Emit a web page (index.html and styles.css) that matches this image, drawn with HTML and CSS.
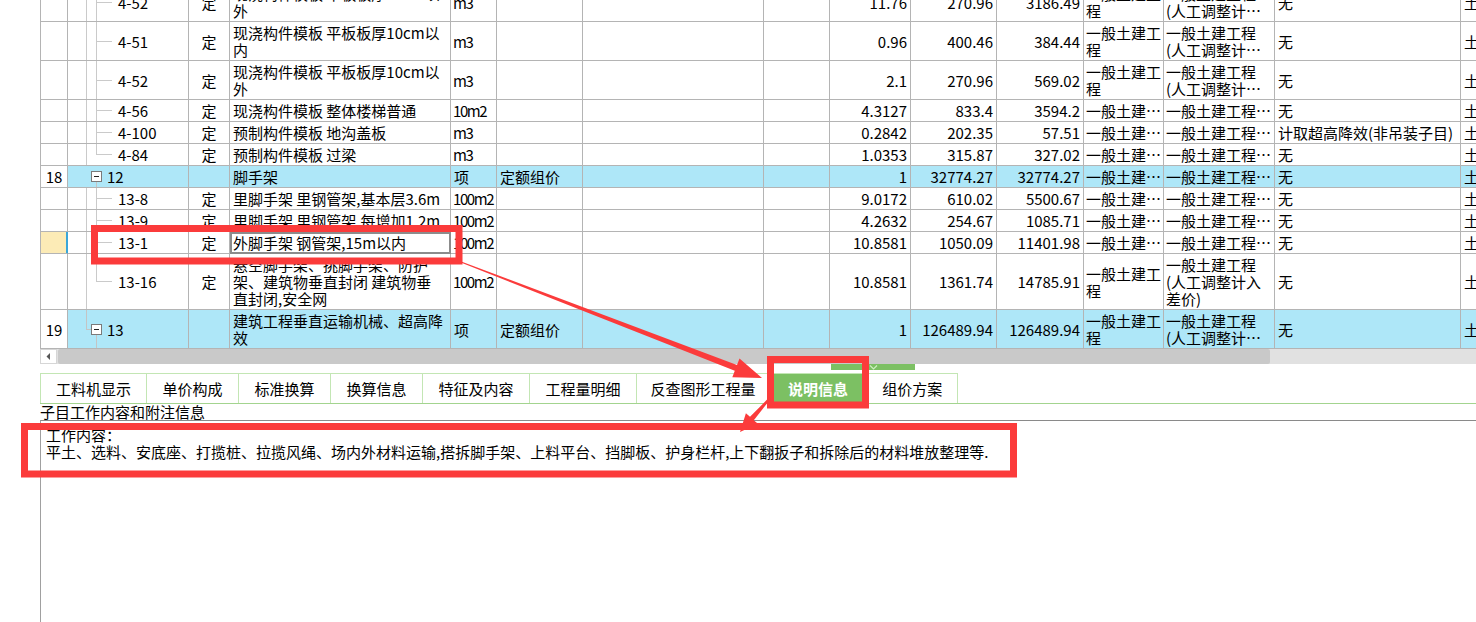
FILE: index.html
```html
<!DOCTYPE html>
<html lang="zh-CN">
<head>
<meta charset="utf-8">
<title>说明信息</title>
<link rel="stylesheet" href="styles.css">
</head>
<body>
<div class="page">
  <div class="pane">
    <div class="grid">
      <table class="sheet">
        <colgroup>
          <col class="k1"><col class="k2"><col class="k3"><col class="k4"><col class="k5">
          <col class="k6"><col class="k7"><col class="k8"><col class="k9"><col class="k10">
          <col class="k11"><col class="k12"><col class="k13"><col class="k14"><col class="k15">
        </colgroup>
        <tbody>
          <tr>
            <td class="no"></td>
            <td class="tree tc-mid">4-52</td>
            <td class="c">定</td>
            <td>现浇构件模板 平板板厚10cm以<br>外</td>
            <td class="u">m3</td><td></td><td></td><td></td>
            <td class="n">11.76</td><td class="n">270.96</td><td class="n">3186.49</td>
            <td class="s">一般土建工<br>程</td>
            <td class="s">一般土建工程<br>(人工调整计…</td>
            <td>无</td><td>土</td>
          </tr>
          <tr>
            <td class="no"></td>
            <td class="tree tc-mid">4-51</td>
            <td class="c">定</td>
            <td>现浇构件模板 平板板厚10cm以<br>内</td>
            <td class="u">m3</td><td></td><td></td><td></td>
            <td class="n">0.96</td><td class="n">400.46</td><td class="n">384.44</td>
            <td class="s">一般土建工<br>程</td>
            <td class="s">一般土建工程<br>(人工调整计…</td>
            <td>无</td><td>土</td>
          </tr>
          <tr>
            <td class="no"></td>
            <td class="tree tc-mid">4-52</td>
            <td class="c">定</td>
            <td>现浇构件模板 平板板厚10cm以<br>外</td>
            <td class="u">m3</td><td></td><td></td><td></td>
            <td class="n">2.1</td><td class="n">270.96</td><td class="n">569.02</td>
            <td class="s">一般土建工<br>程</td>
            <td class="s">一般土建工程<br>(人工调整计…</td>
            <td>无</td><td>土</td>
          </tr>
          <tr>
            <td class="no"></td>
            <td class="tree tc-mid">4-56</td>
            <td class="c">定</td>
            <td>现浇构件模板 整体楼梯普通</td>
            <td class="u">10m2</td><td></td><td></td><td></td>
            <td class="n">4.3127</td><td class="n">833.4</td><td class="n">3594.2</td>
            <td class="s">一般土建…</td><td class="s">一般土建工程…</td>
            <td>无</td><td>土</td>
          </tr>
          <tr>
            <td class="no"></td>
            <td class="tree tc-mid">4-100</td>
            <td class="c">定</td>
            <td>预制构件模板 地沟盖板</td>
            <td class="u">m3</td><td></td><td></td><td></td>
            <td class="n">0.2842</td><td class="n">202.35</td><td class="n">57.51</td>
            <td class="s">一般土建…</td><td class="s">一般土建工程…</td>
            <td>计取超高降效(非吊装子目)</td><td>土</td>
          </tr>
          <tr>
            <td class="no"></td>
            <td class="tree tc-last">4-84</td>
            <td class="c">定</td>
            <td>预制构件模板 过梁</td>
            <td class="u">m3</td><td></td><td></td><td></td>
            <td class="n">1.0353</td><td class="n">315.87</td><td class="n">327.02</td>
            <td class="s">一般土建…</td><td class="s">一般土建工程…</td>
            <td>无</td><td>土</td>
          </tr>
          <tr class="grp">
            <td class="no">18</td>
            <td class="tree tc-p1"><span class="node"><span class="fold"></span><span>12</span></span></td>
            <td class="c"></td>
            <td>脚手架</td>
            <td>项</td><td>定额组价</td><td></td><td></td>
            <td class="n">1</td><td class="n">32774.27</td><td class="n">32774.27</td>
            <td class="s">一般土建…</td><td class="s">一般土建工程…</td>
            <td>无</td><td>土</td>
          </tr>
          <tr>
            <td class="no"></td>
            <td class="tree tc-mid">13-8</td>
            <td class="c">定</td>
            <td>里脚手架 里钢管架,基本层3.6m</td>
            <td class="u">100m2</td><td></td><td></td><td></td>
            <td class="n">9.0172</td><td class="n">610.02</td><td class="n">5500.67</td>
            <td class="s">一般土建…</td><td class="s">一般土建工程…</td>
            <td>无</td><td>土</td>
          </tr>
          <tr>
            <td class="no"></td>
            <td class="tree tc-mid">13-9</td>
            <td class="c">定</td>
            <td>里脚手架 里钢管架,每增加1.2m</td>
            <td class="u">100m2</td><td></td><td></td><td></td>
            <td class="n">4.2632</td><td class="n">254.67</td><td class="n">1085.71</td>
            <td class="s">一般土建…</td><td class="s">一般土建工程…</td>
            <td>无</td><td>土</td>
          </tr>
          <tr class="cur">
            <td class="no mark"></td>
            <td class="tree tc-mid">13-1</td>
            <td class="c">定</td>
            <td class="edit">外脚手架 钢管架,15m以内</td>
            <td class="u">100m2</td><td></td><td></td><td></td>
            <td class="n">10.8581</td><td class="n">1050.09</td><td class="n">11401.98</td>
            <td class="s">一般土建…</td><td class="s">一般土建工程…</td>
            <td>无</td><td>土</td>
          </tr>
          <tr>
            <td class="no"></td>
            <td class="tree tc-last">13-16</td>
            <td class="c">定</td>
            <td>悬空脚手架、挑脚手架、防护<br>架、建筑物垂直封闭 建筑物垂<br>直封闭,安全网</td>
            <td class="u">100m2</td><td></td><td></td><td></td>
            <td class="n">10.8581</td><td class="n">1361.74</td><td class="n">14785.91</td>
            <td class="s">一般土建工<br>程</td>
            <td class="s">一般土建工程<br>(人工调整计入<br>差价)</td>
            <td>无</td><td>土</td>
          </tr>
          <tr class="grp">
            <td class="no">19</td>
            <td class="tree tc-p2"><span class="node"><span class="fold"></span><span>13</span></span></td>
            <td class="c"></td>
            <td>建筑工程垂直运输机械、超高降<br>效</td>
            <td>项</td><td>定额组价</td><td></td><td></td>
            <td class="n">1</td><td class="n">126489.94</td><td class="n">126489.94</td>
            <td class="s">一般土建工<br>程</td>
            <td class="s">一般土建工程<br>(人工调整计…</td>
            <td>无</td><td>土</td>
          </tr>
        </tbody>
      </table>
    </div>

    <div class="hscroll">
      <div class="sb-btn"><svg width="5" height="7" viewBox="0 0 5 7"><polygon points="4,0 4,7 0.5,3.5" fill="#555"/></svg></div>
      <div class="sb-thumb"></div>
    </div>

    <div class="gap">
      <div class="handle"><svg width="9" height="5" viewBox="0 0 9 5"><polyline points="1,0.5 4.5,4 8,0.5" fill="none" stroke="#cfeec2" stroke-width="1.2"/></svg></div>
    </div>

    <div class="tabbar">
      <div class="tabs">
        <div class="tab">工料机显示</div>
        <div class="tab">单价构成</div>
        <div class="tab">标准换算</div>
        <div class="tab">换算信息</div>
        <div class="tab">特征及内容</div>
        <div class="tab">工程量明细</div>
        <div class="tab">反查图形工程量</div>
        <div class="tab active">说明信息</div>
        <div class="tab">组价方案</div>
      </div>
    </div>

    <div class="desc-title">子目工作内容和附注信息</div>
    <div class="desc">
      <p>工作内容：</p>
      <p>平土、选料、安底座、打揽桩、拉揽风绳、场内外材料运输,搭拆脚手架、上料平台、挡脚板、护身栏杆,上下翻扳子和拆除后的材料堆放整理等.</p>
    </div>
  </div>

  <svg class="marks" width="1476" height="622" viewBox="0 0 1476 622">
    <g fill="none" stroke="#fb3b3b" stroke-width="7">
      <rect x="94.5" y="228.5" width="364.5" height="32.5"/>
      <rect x="770.5" y="359.5" width="95" height="45.5"/>
      <rect x="24.5" y="426.5" width="989" height="47.5"/>
    </g>
    <g fill="#fb3b3b">
      <polygon points="460.8,262.5 734.8,370.7 732.3,377.2 762,378 739.5,358.6 737,365.1 461.2,261.5"/>
      <polygon points="770.75,398.66 753.8,420.2 757.9,423.8 740,432 745.9,413.2 750,416.8 769.25,397.34"/>
    </g>
  </svg>
</div>
</body>
</html>
```

FILE: styles.css
```css
* { box-sizing: border-box; }

html, body {
  margin: 0;
  padding: 0;
  background: #fff;
}

body {
  font-family: "Noto Sans CJK SC", "Noto Sans", sans-serif;
  font-size: 15px;
  color: #000;
}

.page {
  position: relative;
  width: 1476px;
  height: 622px;
  overflow: hidden;
}

.pane {
  margin-left: 40px;
  height: 622px;
  display: flex;
  flex-direction: column;
}

/* ---------- grid ---------- */
.grid {
  height: 349px;
  overflow: hidden;
  border-left: 1px solid #b4b4b4;
  flex: none;
}

.sheet {
  margin-top: -17px;
  table-layout: fixed;
  border-collapse: separate;
  border-spacing: 0;
  width: 1490px;
}

.k1 { width: 27px; }
.k2 { width: 121px; }
.k3 { width: 41px; }
.k4 { width: 221px; }
.k5 { width: 46px; }
.k6 { width: 86px; }
.k7 { width: 181px; }
.k8 { width: 66px; }
.k9 { width: 81px; }
.k10 { width: 86px; }
.k11 { width: 87px; }
.k12 { width: 80px; }
.k13 { width: 111px; }
.k14 { width: 186px; }
.k15 { width: 70px; }

.sheet td {
  padding: 2px 3px;
  line-height: 17px;
  border-right: 1px solid #b4b4b4;
  border-bottom: 1px solid #b4b4b4;
  vertical-align: middle;
  white-space: nowrap;
  overflow: hidden;
  text-align: left;
  background-color: #fff;
}

.sheet td.c { text-align: center; padding: 2px 0; }
.sheet td.n { text-align: right; }
.sheet td.s { padding-left: 2px; padding-right: 0; }
.sheet td.u { padding-left: 2px; padding-right: 0; letter-spacing: -1.4px; }
.sheet td.no { text-align: center; padding: 2px 0; background-color: #fff; }

.sheet tr.grp td { background-color: #aee7f8; }
.sheet tr.grp td.no { background-color: #fff; }

.sheet td.mark {
  background-color: #fcebb6;
  border-right-color: #3aa6d8;
  box-shadow: inset -1px 0 0 #3aa6d8;
}

.sheet td.edit {
  outline: 2px solid #8c8c8c;
  outline-offset: -2px;
}

/* tree column: guide lines drawn with gradients */
.sheet td.tree { padding-left: 50px; }

.sheet td.tc-mid {
  background-image:
    linear-gradient(#cacaca, #cacaca),
    linear-gradient(#cacaca, #cacaca),
    linear-gradient(#cacaca, #cacaca);
  background-repeat: no-repeat;
  background-position: 18px 0, 28px 0, 28px 50%;
  background-size: 1px 100%, 1px 100%, 16px 1px;
}

.sheet td.tc-last {
  background-image:
    linear-gradient(#cacaca, #cacaca),
    linear-gradient(#cacaca, #cacaca),
    linear-gradient(#cacaca, #cacaca);
  background-repeat: no-repeat;
  background-position: 18px 0, 28px 0, 28px 50%;
  background-size: 1px 100%, 1px 50%, 16px 1px;
}

.sheet tr.grp td.tree { padding-left: 23px; }

.sheet tr.grp td.tc-p1 {
  background-image: linear-gradient(#c4c4c4, #c4c4c4);
  background-repeat: no-repeat;
  background-position: 28px 100%;
  background-size: 1px 5px;
}

.sheet tr.grp td.tc-p2 {
  background-image:
    linear-gradient(#c4c4c4, #c4c4c4),
    linear-gradient(#c4c4c4, #c4c4c4),
    linear-gradient(#c4c4c4, #c4c4c4);
  background-repeat: no-repeat;
  background-position: 18px 0, 18px 50%, 28px 100%;
  background-size: 1px 50%, 5px 1px, 1px 13px;
}

.node {
  display: inline-flex;
  align-items: center;
  gap: 5px;
  height: 17px;
  vertical-align: top;
}

.fold {
  width: 11px;
  height: 11px;
  border: 1px solid #7a7a7a;
  background:
    linear-gradient(#222, #222) center / 5px 1px no-repeat,
    #fff;
  flex: none;
}

/* ---------- scrollbar ---------- */
.hscroll {
  height: 15px;
  display: flex;
  background: #e1e1e1;
  flex: none;
}

.sb-btn {
  width: 17px;
  height: 15px;
  background: #fff;
  border: 1px solid #d6d6d6;
  display: flex;
  align-items: center;
  justify-content: center;
  flex: none;
}

.sb-thumb {
  width: 1212px;
  margin-left: 1px;
  background: #c9c9c9;
  border-radius: 2px;
  flex: none;
}

/* ---------- splitter gap ---------- */
.gap {
  height: 9px;
  flex: none;
}

.handle {
  margin-left: 791px;
  width: 84px;
  height: 6px;
  background: #7cc063;
  display: flex;
  justify-content: center;
  align-items: flex-start;
  padding-top: 1px;
}

.handle svg { display: block; }

/* ---------- tabs ---------- */
.tabbar {
  border-bottom: 1px solid #a3d48f;
  flex: none;
}

.tabs {
  display: flex;
  width: max-content;
  border-top: 1px solid #c3e6b4;
  border-left: 1px solid #c3e6b4;
}

.tab {
  height: 29px;
  line-height: 29px;
  padding: 0 15px;
  border-right: 1px solid #c3e6b4;
  white-space: nowrap;
}

.tab:nth-child(2),
.tab:nth-child(3),
.tab:nth-child(4) { padding: 0 15.5px; }

.tab:nth-child(5),
.tab:nth-child(6) { padding: 0 15.5px; }

.tab:nth-child(7) { padding: 0 13.5px; }

.tab.active {
  background: #7cc063;
  color: #fff;
  font-weight: bold;
  padding: 0 18px;
}

.tab:nth-child(9) { padding: 0 15px; }

/* ---------- description ---------- */
.desc-title {
  height: 16px;
  line-height: 16px;
  flex: none;
}

.desc {
  flex: 1;
  border-top: 1px solid #8a8a8a;
  border-left: 1px solid #a0a0a0;
  padding: 5px 0 0 5px;
}

.desc p {
  margin: 0;
  line-height: 17px;
  white-space: nowrap;
}

/* ---------- annotation overlay ---------- */
.marks {
  position: absolute;
  left: 0;
  top: 0;
  pointer-events: none;
}
```
